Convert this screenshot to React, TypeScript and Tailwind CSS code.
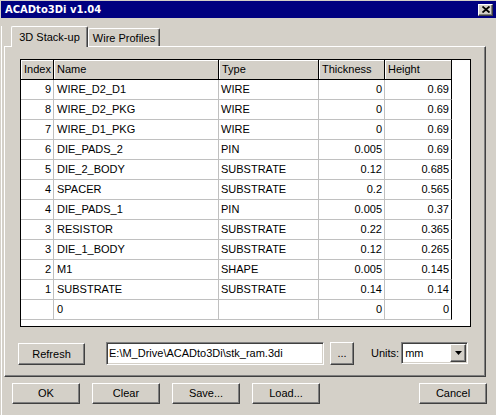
import React from 'react'

type Row = { idx: string; name: string; type: string; thick: string; height: string }

const ROWS: Row[] = [
  { idx: '9', name: 'WIRE_D2_D1', type: 'WIRE', thick: '0', height: '0.69' },
  { idx: '8', name: 'WIRE_D2_PKG', type: 'WIRE', thick: '0', height: '0.69' },
  { idx: '7', name: 'WIRE_D1_PKG', type: 'WIRE', thick: '0', height: '0.69' },
  { idx: '6', name: 'DIE_PADS_2', type: 'PIN', thick: '0.005', height: '0.69' },
  { idx: '5', name: 'DIE_2_BODY', type: 'SUBSTRATE', thick: '0.12', height: '0.685' },
  { idx: '4', name: 'SPACER', type: 'SUBSTRATE', thick: '0.2', height: '0.565' },
  { idx: '4', name: 'DIE_PADS_1', type: 'PIN', thick: '0.005', height: '0.37' },
  { idx: '3', name: 'RESISTOR', type: 'SUBSTRATE', thick: '0.22', height: '0.365' },
  { idx: '3', name: 'DIE_1_BODY', type: 'SUBSTRATE', thick: '0.12', height: '0.265' },
  { idx: '2', name: 'M1', type: 'SHAPE', thick: '0.005', height: '0.145' },
  { idx: '1', name: 'SUBSTRATE', type: 'SUBSTRATE', thick: '0.14', height: '0.14' },
  { idx: '', name: '0', type: '', thick: '0', height: '0' },
]

const RAISED =
  'bg-[#d4d0c8] border border-t-white border-l-white border-r-[#404040] border-b-[#404040] shadow-[inset_-1px_-1px_0_#808080]'

const SUNKEN =
  'border border-t-[#808080] border-l-[#808080] border-r-white border-b-white shadow-[inset_1px_1px_0_#404040,inset_-1px_-1px_0_#d4d0c8]'

const HEAD =
  'h-[20px] shrink-0 flex items-center pl-[3px] bg-[#d4d0c8] border-r border-b border-black shadow-[inset_1px_1px_0_#fff]'

const CELL = 'h-[20px] shrink-0 flex items-center border-r border-b border-[#c0c0c0] whitespace-nowrap'

function Btn({ label, className }: { label: string; className?: string }) {
  return (
    <button
      type="button"
      className={`flex items-center justify-center text-[11px] text-black ${RAISED} ${className ?? ''}`}
    >
      {label}
    </button>
  )
}

function CloseBox() {
  return (
    <div className={`w-[15px] h-[12px] flex items-center justify-center ${RAISED}`}>
      <svg width="8" height="7" viewBox="0 0 8 7">
        <path d="M0.5 0.5 L7.5 6.5 M7.5 0.5 L0.5 6.5" stroke="#000" strokeWidth="1.8" />
      </svg>
    </div>
  )
}

function Grid() {
  return (
    <div className="w-[451px] h-[268px] border border-black bg-white flex flex-col">
      <div className="flex">
        <div className={`${HEAD} w-[33px]`}>Index</div>
        <div className={`${HEAD} w-[165px]`}>Name</div>
        <div className={`${HEAD} w-[100px]`}>Type</div>
        <div className={`${HEAD} w-[66px]`}>Thickness</div>
        <div className={`${HEAD} w-[67px]`}>Height</div>
        <div className="flex-1" />
      </div>
      {ROWS.map((r, i) => (
        <div key={i} className="flex">
          <div className={`${CELL} w-[33px] justify-end pr-[2px]`}>{r.idx}</div>
          <div className={`${CELL} w-[165px] pl-[3px]`}>{r.name}</div>
          <div className={`${CELL} w-[100px] pl-[2px]`}>{r.type}</div>
          <div className={`${CELL} w-[66px] justify-end pr-[2px]`}>{r.thick}</div>
          <div className={`${CELL} w-[67px] justify-end pr-[2px] border-r-black`}>{r.height}</div>
          <div className="flex-1" />
        </div>
      ))}
    </div>
  )
}

export default function App() {
  return (
    <div className="w-[496px] h-[415px] overflow-hidden bg-[#d4d0c8] pt-px font-['Liberation_Sans',Arial,sans-serif] text-[11px] text-black">
      <div className="ml-px h-[17px] bg-[#000080] flex items-center justify-between pl-[4px] pr-[3px]">
        <span className="font-['DejaVu_Sans',sans-serif] font-bold text-[10px] text-white">ACADto3Di v1.04</span>
        <CloseBox />
      </div>

      <div className="ml-px h-[397px] border-l border-white pl-px">
        {/* tabs */}
        <div className="mt-[8px] h-[20px] flex items-end pl-[8px]">
          <div className="relative z-10 -mb-px w-[77px] h-[21px] pt-px flex items-center justify-center bg-[#d4d0c8] border-t border-l border-r border-t-white border-l-white border-r-[#404040] shadow-[inset_-1px_0_0_#808080] rounded-t-[2px]">
            3D Stack-up
          </div>
          <div className="w-[72px] h-[18px] pt-px flex items-center justify-center bg-[#d4d0c8] border-t border-l border-r border-t-white border-l-white border-r-[#404040] shadow-[inset_-1px_0_0_#808080] rounded-t-[2px]">
            Wire Profiles
          </div>
        </div>

        {/* tab panel */}
        <div className="ml-px w-[482px] h-[331px] border border-t-white border-l-white border-r-[#404040] border-b-[#404040] shadow-[inset_-1px_-1px_0_#808080]">
          <div className="mt-[12px] ml-[15px]">
            <Grid />
          </div>
          <div className="mt-[15px] ml-[13px] flex items-start">
            <Btn label="Refresh" className="mt-px w-[67px] h-[22px]" />
            <div className={`ml-[21px] w-[218px] h-[23px] bg-white flex items-center pl-[2px] pb-px whitespace-nowrap overflow-hidden ${SUNKEN}`}>
              E:\M_Drive\ACADto3Di\stk_ram.3di
            </div>
            <Btn label="..." className="ml-[6px] w-[24px] h-[23px]" />
            <div className="ml-[17px] h-[23px] flex items-center">Units:</div>
            <div className={`ml-[2px] w-[67px] h-[22px] bg-white flex items-center ${SUNKEN}`}>
              <span className="flex-1 pl-[3px]">mm</span>
              <div className={`w-[16px] h-[18px] mr-px flex items-center justify-center ${RAISED}`}>
                <svg width="7" height="4" viewBox="0 0 7 4">
                  <polygon points="0,0 7,0 3.5,4" fill="#000" />
                </svg>
              </div>
            </div>
          </div>
        </div>

        {/* dialog buttons */}
        <div className="mt-[6px] pl-[9px] pr-[9px] flex gap-[12px]">
          <Btn label="OK" className="w-[68px] h-[21px]" />
          <Btn label="Clear" className="w-[68px] h-[21px]" />
          <Btn label="Save..." className="w-[68px] h-[21px]" />
          <Btn label="Load..." className="w-[68px] h-[21px]" />
          <Btn label="Cancel" className="ml-auto w-[68px] h-[21px]" />
        </div>
      </div>
    </div>
  )
}
